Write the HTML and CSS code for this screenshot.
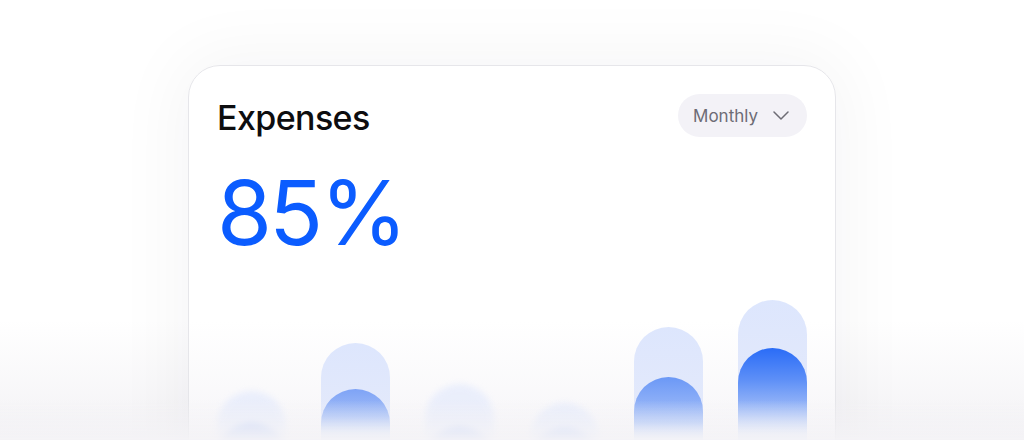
FILE: index.html
```html
<!DOCTYPE html>
<html lang="en">
<head>
  <meta charset="UTF-8" />
  <meta name="viewport" content="width=device-width, initial-scale=1.0"/>
  <title>Expenses</title>
  <link rel="stylesheet" href="styles.css">
</head>
<body>
  <div class="page">
    <div class="card">
      <div class="card-header">
        <h2 class="card-title">Expenses</h2>
        <button class="period-select">
          <span>Monthly</span>
          <svg class="chevron" viewBox="0 0 16 9" width="16" height="9">
            <path d="M1 1l7 7 7-7" fill="none" stroke="currentColor" stroke-width="1.5" stroke-linecap="round" stroke-linejoin="round"/>
          </svg>
        </button>
      </div>
      <div class="total">85%</div>
      <div class="chart">
        <div class="bar faded" style="height: 78px"><div class="bar-fill" style="height: 46px"></div></div>
        <div class="bar mid" style="height: 126px"><div class="bar-fill" style="height: 80px"></div></div>
        <div class="bar faded" style="height: 85px"><div class="bar-fill" style="height: 42px"></div></div>
        <div class="bar faded" style="height: 66px"><div class="bar-fill" style="height: 41px"></div></div>
        <div class="bar" style="height: 142px"><div class="bar-fill" style="height: 92px"></div></div>
        <div class="bar active" style="height: 169px"><div class="bar-fill" style="height: 121px"></div></div>
      </div>
    </div>
  </div>
</body>
</html>
```

FILE: styles.css
```css
body {
  margin: 0;
  padding: 0;
  background: linear-gradient(to bottom, #fff 0, #fff 320px, #f3f2f5 440px);
  font-family: Inter, "Open Sans", sans-serif;
  color: #111;
  height: 440px;
  overflow: hidden;
}
/* bottom fade over everything */
body::after {
  content: "";
  position: fixed;
  left: 0; right: 0; bottom: 0;
  height: 40px;
  background: linear-gradient(to bottom, rgba(244,243,246,0) 0%, rgba(244,243,246,0.5) 60%, rgba(244,243,246,0.9) 100%);
  pointer-events: none;
}
.page {
  display: flex;
  justify-content: center;
  padding-top: 65px;
}
.card {
  width: 590px;
  padding: 27px 28px 40px;
  background: linear-gradient(to bottom, #fff 0, #fff 255px, #f6f5f8 375px);
  border: 1.5px solid #e6e6ea;
  border-radius: 32px;
  box-shadow: 0 0 70px 10px rgba(30,30,50,0.045);
}
.card-header {
  display: flex;
  align-items: center;
  justify-content: space-between;
}
.card-title {
  margin: 5px 0 0;
  font-size: 34px;
  font-weight: 500;
  letter-spacing: -0.6px;
  line-height: 1.2;
  color: #0d0d0f;
}
.period-select {
  display: flex;
  align-items: center;
  gap: 15px;
  height: 43px;
  padding: 0 18px 0 15px;
  border: none;
  border-radius: 22px;
  background: #f3f2f7;
  color: #6d6c75;
  font-family: inherit;
  font-size: 17px;
  cursor: pointer;
}
.chevron {
  display: block;
}
.total {
  margin-top: 29px;
  font-size: 89px;
  line-height: 1;
  font-weight: 400;
  letter-spacing: -3px;
  color: #0b5cff;
}
.chart {
  height: 212px;
  display: flex;
  align-items: flex-end;
  justify-content: space-between;
}
.bar {
  width: 69px;
  display: flex;
  align-items: flex-end;
  border-radius: 35px 35px 0 0;
  background: linear-gradient(180deg, #dde6fd 0%, #e3e9fb 55%, #eef1f9 100%);
  overflow: hidden;
}
.bar-fill {
  width: 100%;
  border-radius: 35px 35px 0 0;
  background: linear-gradient(180deg, #6b98f6 0%, #a9c2f8 50%, #dfe6f9 67%, #eceff9 100%);
}
.bar.mid .bar-fill {
  background: linear-gradient(180deg, #7ea3f6 0%, #a5bff7 35%, #dce5f9 56%, #eceff9 100%);
}
.bar.active .bar-fill {
  background: linear-gradient(180deg, #2a6cf7 0%, #5d8ff7 26%, #a9c2f8 55%, #e0e7f9 71%, #eceff9 100%);
}
.bar.faded {
  filter: blur(3px);
  opacity: 0.55;
}
.bar.faded .bar-fill {
  background: linear-gradient(180deg, #a3bcf7 0%, #d0ddfa 100%);
}
```
